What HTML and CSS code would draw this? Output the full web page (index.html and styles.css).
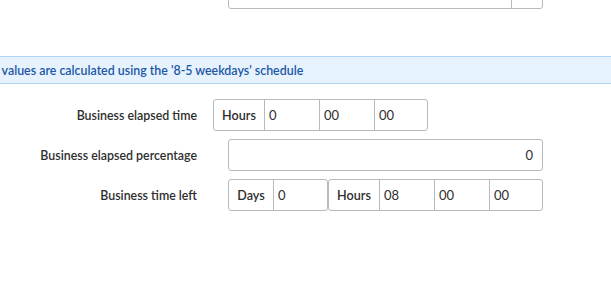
FILE: index.html
```html
<!DOCTYPE html>
<html>
<head>
<meta charset="utf-8">
<link rel="stylesheet" href="styles.css">
</head>
<body>
<div class="page">
  <div class="top-row">
    <div class="top-field">
      <div class="top-input"></div>
      <div class="top-btn"></div>
    </div>
  </div>
  <div class="banner"><span class="banner-text">These values are calculated using the '8-5 weekdays' schedule</span></div>
  <div class="form">
    <div class="row">
      <div class="label">Business elapsed time</div>
      <div class="field field-narrow">
        <div class="group">
          <span class="addon addon-hours">Hours</span>
          <span class="cell">0</span>
          <span class="cell">00</span>
          <span class="cell cell-last">00</span>
        </div>
      </div>
    </div>
    <div class="row">
      <div class="label">Business elapsed percentage</div>
      <div class="field">
        <div class="single">0</div>
      </div>
    </div>
    <div class="row">
      <div class="label">Business time left</div>
      <div class="field">
        <div class="group group-days">
          <span class="addon addon-days">Days</span>
          <span class="cell cell-last">0</span>
        </div>
        <div class="group group-hours">
          <span class="addon addon-hours">Hours</span>
          <span class="cell">08</span>
          <span class="cell">00</span>
          <span class="cell cell-last">00</span>
        </div>
      </div>
    </div>
  </div>
</div>
</body>
</html>
```
FILE: styles.css
```css
html, body {
  margin: 0;
  padding: 0;
  background: #ffffff;
}
body {
  font-family: "Lato", "Liberation Sans", sans-serif;
  font-size: 13px;
  color: #2e2e2e;
  overflow: hidden;
}
.page {
  width: 611px;
  height: 281px;
  overflow: hidden;
}
.top-row {
  height: 9px;
  display: flex;
  align-items: flex-end;
  padding-left: 228px;
  overflow: hidden;
}
.top-field {
  display: flex;
  width: 315px;
  height: 32px;
  flex: none;
  border: 1px solid #b6b9c0;
  border-radius: 3px;
  box-sizing: border-box;
}
.top-input {
  flex: 1;
}
.top-btn {
  width: 30px;
  border-left: 1px solid #b6b9c0;
}
.banner {
  margin-top: 47px;
  height: 26px;
  border-top: 1px solid #b0d5f6;
  border-bottom: 1px solid #b0d5f6;
  background: #e6f2fd;
  display: flex;
  align-items: center;
  overflow: hidden;
  white-space: nowrap;
}
.banner-text {
  color: #1c57a6;
  margin-left: -34px;
  font-size: 12.4px;
  font-weight: 600;
}
.form {
  padding-top: 15px;
  display: flex;
  flex-direction: column;
  gap: 8px;
}
.row {
  display: flex;
  align-items: center;
  height: 32px;
}
.label {
  width: 197px;
  text-align: right;
  flex: none;
  color: #2e2e2e;
  font-size: 12.4px;
  font-weight: 600;
}
.field {
  display: flex;
  padding-left: 31px;
}
.field-narrow {
  padding-left: 16px;
}
.group {
  display: flex;
  height: 32px;
  box-sizing: border-box;
  border: 1px solid #b6b9c0;
  border-radius: 3px;
}
.addon {
  display: flex;
  align-items: center;
  justify-content: center;
  box-sizing: border-box;
  border-right: 1px solid #b6b9c0;
  font-weight: 600;
  font-size: 12.6px;
}
.addon-hours {
  width: 51px;
}
.addon-days {
  width: 45px;
}
.cell {
  display: flex;
  align-items: center;
  width: 55px;
  box-sizing: border-box;
  padding-left: 4px;
  border-right: 1px solid #b6b9c0;
}
.cell-last {
  border-right: none;
  width: 52px;
}
.group-days .cell-last {
  width: 53px;
}
.single {
  width: 315px;
  height: 32px;
  box-sizing: border-box;
  border: 1px solid #b6b9c0;
  border-radius: 3px;
  display: flex;
  align-items: center;
  justify-content: flex-end;
  padding-right: 9px;
}
```
